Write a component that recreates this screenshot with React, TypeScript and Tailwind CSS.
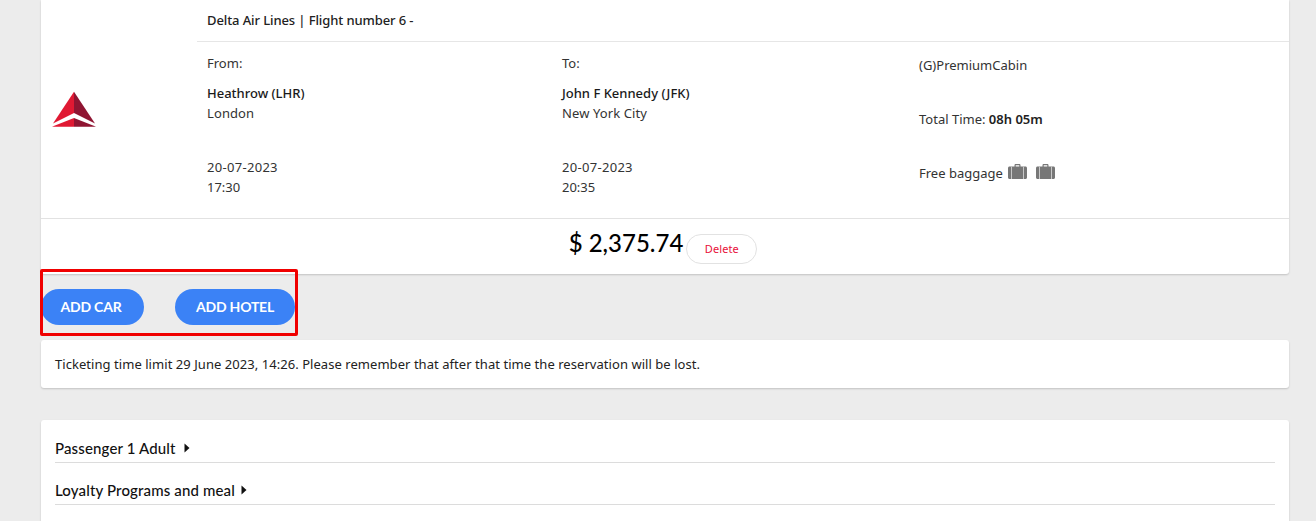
function Suitcase() {
  return (
    <svg width="19" height="15" viewBox="0 0 19 15" className="shrink-0">
      <path d="M6.500 3V1.200C6.500 .5 7 0 7.700 0h3.600c.7 0 1.200.5 1.200 1.200V3h-1.200V1.200H7.700V3z" fill="#777" />
      <path d="M1.500 2.500h16c.8 0 1.500.7 1.500 1.500v9.500c0 .8-.7 1.500-1.500 1.500h-16C.7 15 0 14.300 0 13.500V4c0-.8.7-1.500 1.500-1.500z" fill="#777" />
      <rect x="3" y="2.500" width="1" height="12.500" fill="#c8c8c8" />
      <rect x="15" y="2.500" width="1" height="12.500" fill="#c8c8c8" />
    </svg>
  );
}

function DeltaLogo() {
  return (
    <svg width="44" height="36" viewBox="0 0 44 36">
      <path d="M22 .7 L22 22 L1 32.500 Z" fill="#e01933" />
      <path d="M22 .7 L22 22 L43 32.500 Z" fill="#8f1532" />
      <path d="M22 27 L3 34.500 L0 35.700 L22 35.700 Z" fill="#e01933" />
      <path d="M22 27 L41 34.500 L44 35.700 L22 35.700 Z" fill="#8f1532" />
    </svg>
  );
}

function Caret({ className }: { className: string }) {
  return (
    <svg width="6" height="10" viewBox="0 0 6 10" className={`${className} mb-[2px] inline-block`}>
      <path d="M0.500 0.500 L5.500 5 L0.500 9.500 Z" fill="#111" />
    </svg>
  );
}

function PlaceColumn({ label, airport, city, date, time, width }: { label: string; airport: string; city: string; date: string; time: string; width: string }) {
  return (
    <div className={`${width} pl-[10px] pt-[11px] text-[13px] leading-[20px] text-[#333]`}>
      <div>{label}</div>
      <div className="mt-[10px] font-medium text-[#1a1a1a]">{airport}</div>
      <div className="tracking-[0.1px]">{city}</div>
      <div className="mt-[34px] tracking-[0.3px]">{date}</div>
      <div>{time}</div>
    </div>
  );
}

export default function App() {
  return (
    <div className="h-[521px] overflow-hidden bg-[#ececec] font-['Noto_Sans',sans-serif]">
      <div className="relative ml-[41px] w-[1248px]">
        {/* flight card */}
        <div className="rounded-b-[3px] bg-white shadow-[0_1px_2px_rgba(0,0,0,0.18)]">
          <div className="flex h-[219px] border-b border-[#e2e2e2]">
            <div className="flex w-[156px] shrink-0 pl-[11px] pt-[91px]">
              <DeltaLogo />
            </div>
            <div className="flex-1">
              <div className="flex h-[42px] items-center border-b border-[#e6e6e6] pl-[10px] text-[13px] font-medium tracking-[-0.1px] text-[#222]">
                Delta Air Lines | Flight number 6 -
              </div>
              <div className="flex">
                <PlaceColumn width="w-[355px]" label="From:" airport="Heathrow (LHR)" city="London" date="20-07-2023" time="17:30" />
                <PlaceColumn width="w-[356px]" label="To:" airport="John F Kennedy (JFK)" city="New York City" date="20-07-2023" time="20:35" />
                <div className="pl-[11px] pt-[13px] text-[13px] leading-[20px] text-[#333]">
                  <div>(G)PremiumCabin</div>
                  <div className="mt-[34px]">
                    Total Time: <span className="font-semibold text-[#222]">08h 05m</span>
                  </div>
                  <div className="mt-[34px] flex items-center">
                    Free baggage
                    <span className="mb-[4px] ml-[5px] flex gap-[9px]">
                      <Suitcase />
                      <Suitcase />
                    </span>
                  </div>
                </div>
              </div>
            </div>
          </div>
          <div className="flex h-[55px] items-start justify-center pr-[4px] pt-[9px]">
            <span className="font-['Lato',sans-serif] text-[24px] font-medium leading-[30px] text-black">$ 2,375.74</span>
            <button className="ml-[3px] mt-[6px] h-[30px] w-[71px] rounded-full border border-[#e2e2e2] bg-white text-[11px] tracking-[0.1px] text-[#e8103a]">
              Delete
            </button>
          </div>
        </div>

        {/* add-on buttons */}
        <div className="flex gap-[31px] pt-[15px]">
          <button className="h-[36px] w-[103px] rounded-full bg-[#3b82f6] pb-[1px] pr-[3px] font-['Lato',sans-serif] text-[14px] font-bold tracking-[-0.2px] text-white">ADD CAR</button>
          <button className="h-[36px] w-[120px] rounded-full bg-[#3b82f6] pb-[1px] font-['Lato',sans-serif] text-[14px] font-bold tracking-[-0.2px] text-white">ADD HOTEL</button>
        </div>

        {/* highlight */}
        <div className="absolute left-[-1px] top-[269px] h-[67px] w-[258px] rounded-[2px] border-[3px] border-[#f00000]" />

        {/* ticketing notice */}
        <div className="mt-[15px] flex h-[48px] items-center rounded-[3px] bg-white pl-[14px] pt-[1px] text-[13px] tracking-[0.05px] text-[#222] shadow-[0_1px_2px_rgba(0,0,0,0.18)]">
          Ticketing time limit 29 June 2023, 14:26. Please remember that after that time the reservation will be lost.
        </div>

        {/* passenger card */}
        <div className="mt-[32px] h-[120px] rounded-[3px] bg-white px-[14px] pt-[19px] font-['Lato',sans-serif] text-[15px] font-medium tracking-[0.14px] text-[#111] shadow-[0_1px_2px_rgba(0,0,0,0.18)]">
          <div className="flex h-[24px] items-center border-b border-[#dcdcdc] pb-[4px]">
            Passenger 1 Adult
            <Caret className="ml-[8px]" />
          </div>
          <div className="mt-[18px] flex h-[24px] items-center border-b border-[#dcdcdc] pb-[4px]">
            Loyalty Programs and meal
            <Caret className="ml-[6px]" />
          </div>
        </div>
      </div>
    </div>
  );
}
